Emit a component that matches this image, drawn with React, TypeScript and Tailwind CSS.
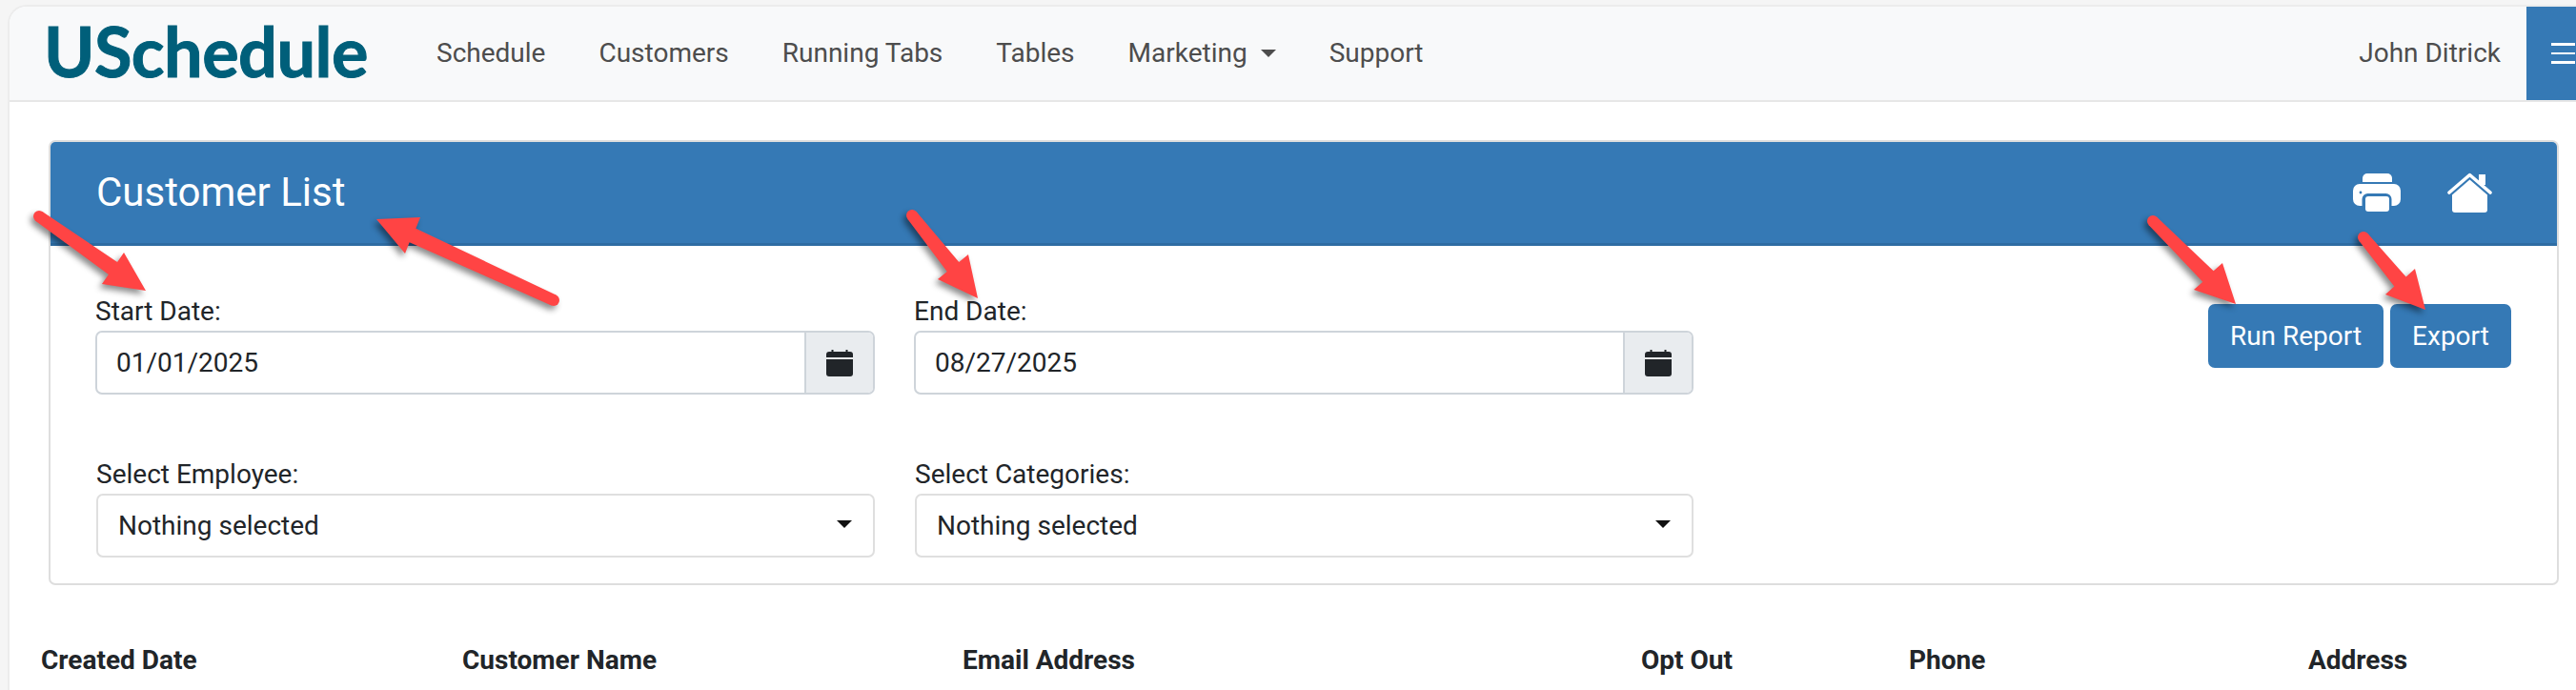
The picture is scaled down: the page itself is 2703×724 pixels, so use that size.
const roboto = "font-['Roboto',sans-serif]";

const navItems = ["Schedule", "Customers", "Running Tabs", "Tables"];

function Arrow({ tail, tip, a, b }: { tail: number[]; tip: number[]; a: number[]; b: number[] }) {
  const mx = (a[0] + b[0]) / 2;
  const my = (a[1] + b[1]) / 2;
  const dx = mx - tail[0];
  const dy = my - tail[1];
  const len = Math.hypot(dx, dy);
  const nx = -dy / len;
  const ny = dx / len;
  const t0 = 6;
  const t1 = 8;
  const first = nx * (a[0] - mx) + ny * (a[1] - my) > 0 ? a : b;
  const second = first === a ? b : a;
  const pts = [
    [tail[0] + nx * t0, tail[1] + ny * t0],
    [mx + nx * t1, my + ny * t1],
    first,
    tip,
    second,
    [mx - nx * t1, my - ny * t1],
    [tail[0] - nx * t0, tail[1] - ny * t0],
  ];
  return (
    <g>
      <circle cx={tail[0]} cy={tail[1]} r={t0} fill="#ff4444" />
      <polygon points={pts.map((p) => p.join(",")).join(" ")} fill="#ff4444" />
    </g>
  );
}

function CalendarIcon() {
  return (
    <svg viewBox="0 0 28 28" className="w-[28px] h-[28px]" fill="#212529">
      <rect x="5.5" y="0" width="2" height="4" />
      <rect x="20.5" y="0" width="2" height="4" />
      <path d="M3 2h22a3 3 0 0 1 3 3v3H0V5a3 3 0 0 1 3-3z" />
      <path d="M0 10h28v15a3 3 0 0 1-3 3H3a3 3 0 0 1-3-3z" />
    </svg>
  );
}

function PrintIcon() {
  return (
    <svg viewBox="0 0 50 40" className="w-[50px] h-[40px]" fill="#fff">
      <path d="M10 9V5a5 5 0 0 1 5-5h21a5 5 0 0 1 5 5v4z" />
      <rect x="0" y="11" width="50" height="23" rx="7" />
      <rect x="9.5" y="21" width="31" height="19" rx="6" fill="#3579b5" />
      <rect x="13" y="24" width="25" height="16" rx="3" />
      <circle cx="8" cy="20" r="1.4" fill="#3579b5" />
    </svg>
  );
}

function HomeIcon() {
  return (
    <svg viewBox="0 0 47 42" className="w-[47px] h-[42px]" fill="#fff">
      <rect x="33" y="2" width="7" height="11" />
      <path d="M2 21 23.5 2.5 45 21" fill="none" stroke="#fff" strokeWidth="3.6" strokeLinecap="round" strokeLinejoin="round" />
      <path d="M23.5 7.5 42 23.5V39a3 3 0 0 1-3 3H8a3 3 0 0 1-3-3V23.5z" />
    </svg>
  );
}

function Field({ label, value }: { label: string; value: string }) {
  return (
    <div className="w-[818px]">
      <div className="text-[28px] leading-[41px] text-[#212529]">{label}</div>
      <div className="flex h-[67px] rounded-[7px] border-2 border-[#ced4da] overflow-hidden bg-white">
        <div className="flex-1 flex items-center pl-[20px] text-[28px] text-[#212529] [font-kerning:none]">{value}</div>
        <div className="w-[72px] flex items-center justify-center bg-[#e9ecef] border-l-2 border-[#ced4da]">
          <CalendarIcon />
        </div>
      </div>
    </div>
  );
}

function Select({ label }: { label: string }) {
  return (
    <div className="w-[817px]">
      <div className="text-[28px] leading-[41px] text-[#212529]">{label}</div>
      <div className="flex items-center justify-between h-[67px] rounded-[7px] border-2 border-[#dfdfdf] bg-white pl-[21px] pr-[22px]">
        <span className="text-[28px] text-[#212529]">Nothing selected</span>
        <span className="w-0 h-0 border-x-[8px] border-x-transparent border-t-[8px] border-t-[#111] -mt-[4px]" />
      </div>
    </div>
  );
}

export default function App() {
  return (
    <div className={`${roboto} relative w-[2703px] h-[724px] overflow-hidden bg-[#f5f5f5] pt-[5px] pl-[8px]`}>
      <div className="h-[719px] bg-white rounded-tl-[20px] border-l-2 border-t-2 border-[#ececec] overflow-hidden">
        <nav className="flex items-center h-[100px] bg-[#f8f9fa] border-b-2 border-[#e7e7e7]">
          <div className="ml-[36px] w-[412px] font-['Lato',sans-serif] font-bold text-[72px] leading-none text-[#005f7a] tracking-[-0.5px] -mt-[6px] [-webkit-text-stroke:1px_#005f7a]">
            USchedule
          </div>
          <ul className="flex items-center text-[28px] text-[#4d4d4d]">
            {navItems.map((n) => (
              <li key={n} className="mr-[56px]">{n}</li>
            ))}
            <li className="mr-[56px] flex items-center">
              Marketing
              <span className="ml-[14px] w-0 h-0 border-x-[8px] border-x-transparent border-t-[8px] border-t-[#4d4d4d]" />
            </li>
            <li>Support</li>
          </ul>
          <div className="ml-auto flex items-center h-full">
            <span className="text-[28px] text-[#4d4d4d] mr-[27px]">John Ditrick</span>
            <div className="w-[52px] h-full bg-[#3579b5] flex flex-col justify-center gap-[7px] pl-[26px]">
              <span className="block h-[2.5px] w-[25px] bg-white shrink-0" />
              <span className="block h-[2.5px] w-[25px] bg-white shrink-0" />
              <span className="block h-[2.5px] w-[25px] bg-white shrink-0" />
            </div>
          </div>
        </nav>

        <section className="ml-[41px] mt-[40px] w-[2634px] h-[467px] rounded-[7px] border-2 border-[#dedede] overflow-hidden">
          <header className="flex items-center justify-between h-[109px] bg-[#3579b5] border-b-[3px] border-[#2e6ca3] pl-[48px] pr-[68px] text-white">
            <h1 className="text-[42px] font-normal leading-none">Customer List</h1>
            <div className="flex items-center gap-[49px]">
              <PrintIcon />
              <HomeIcon />
            </div>
          </header>
          <div className="relative pl-[47px] pt-[48px]">
            <div className="flex gap-[41px]">
              <Field label="Start Date:" value="01/01/2025" />
              <Field label="End Date:" value="08/27/2025" />
            </div>
            <div className="flex gap-[42px] mt-[63px] ml-[1px]">
              <Select label="Select Employee:" />
              <Select label="Select Categories:" />
            </div>
            <div className="absolute left-[2264px] top-[61px] flex gap-[7px] text-[28px] text-white">
              <button className="h-[67px] w-[184px] rounded-[7px] bg-[#3579b5]">Run Report</button>
              <button className="h-[67px] w-[127px] rounded-[7px] bg-[#3579b5]">Export</button>
            </div>
          </div>
        </section>

        <div className="flex pl-[33px] mt-[59px] text-[28px] font-bold text-[#212529] leading-[40px]">
          <div className="w-[442px]">Created Date</div>
          <div className="w-[525px]">Customer Name</div>
          <div className="w-[712px]">Email Address</div>
          <div className="w-[281px]">Opt Out</div>
          <div className="w-[419px]">Phone</div>
          <div>Address</div>
        </div>
      </div>

      <svg className="absolute inset-0 pointer-events-none drop-shadow-[-3px_4px_3px_rgba(0,0,0,0.45)]" width="2703" height="724">
        <Arrow tail={[41, 227]} tip={[153, 305]} a={[130, 265]} b={[107, 298]} />
        <Arrow tail={[581, 315]} tip={[395, 230]} a={[441, 228]} b={[425, 266]} />
        <Arrow tail={[957, 226]} tip={[1026, 313]} a={[1016, 267]} b={[984, 293]} />
        <Arrow tail={[2259, 232]} tip={[2346, 319]} a={[2332, 276]} b={[2302, 304]} />
        <Arrow tail={[2480, 249]} tip={[2545, 325]} a={[2534, 282]} b={[2503, 309]} />
      </svg>
    </div>
  );
}
